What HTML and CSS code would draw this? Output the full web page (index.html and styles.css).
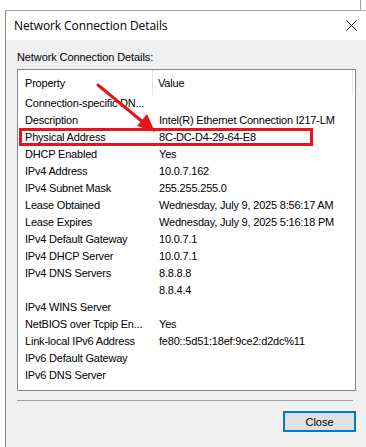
FILE: index.html
```
<!DOCTYPE html>
<html lang="en">
<head>
    <meta charset="UTF-8">
    <title>Network Connection Details</title>
    <link rel="stylesheet" href="styles.css">
</head>
<body>
    <div class="behind"></div>
    <div class="dialog">
        <div class="titlebar">
            <span class="title">Network Connection Details</span>
            <svg class="close-x" width="11" height="11" viewBox="0 0 11 11">
                <path d="M0.5 0.5 L10.5 10.5 M10.5 0.5 L0.5 10.5" stroke="#000" stroke-width="1" fill="none"/>
            </svg>
        </div>
        <div class="content">
            <div class="label">Network Connection Details:</div>
            <div class="listview">
                <div class="lv-head">
                    <div class="hcol prop">Property</div>
                    <div class="hcol val">Value</div>
                    <div class="hcol rest"></div>
                </div>
                <div class="row"><span class="p">Connection-specific DN...</span><span class="v"></span></div>
                <div class="row"><span class="p">Description</span><span class="v">Intel(R) Ethernet Connection I217-LM</span></div>
                <div class="row"><span class="p">Physical Address</span><span class="v">8C-DC-D4-29-64-E8</span></div>
                <div class="row"><span class="p">DHCP Enabled</span><span class="v">Yes</span></div>
                <div class="row"><span class="p">IPv4 Address</span><span class="v">10.0.7.162</span></div>
                <div class="row"><span class="p">IPv4 Subnet Mask</span><span class="v">255.255.255.0</span></div>
                <div class="row"><span class="p">Lease Obtained</span><span class="v">Wednesday, July 9, 2025 8:56:17 AM</span></div>
                <div class="row"><span class="p">Lease Expires</span><span class="v">Wednesday, July 9, 2025 5:16:18 PM</span></div>
                <div class="row"><span class="p">IPv4 Default Gateway</span><span class="v">10.0.7.1</span></div>
                <div class="row"><span class="p">IPv4 DHCP Server</span><span class="v">10.0.7.1</span></div>
                <div class="row"><span class="p">IPv4 DNS Servers</span><span class="v">8.8.8.8</span></div>
                <div class="row"><span class="p"></span><span class="v">8.8.4.4</span></div>
                <div class="row"><span class="p">IPv4 WINS Server</span><span class="v"></span></div>
                <div class="row"><span class="p">NetBIOS over Tcpip En...</span><span class="v">Yes</span></div>
                <div class="row"><span class="p">Link-local IPv6 Address</span><span class="v">fe80::5d51:18ef:9ce2:d2dc%11</span></div>
                <div class="row"><span class="p">IPv6 Default Gateway</span><span class="v"></span></div>
                <div class="row"><span class="p">IPv6 DNS Server</span><span class="v"></span></div>
            </div>
            <div class="sep"></div>
            <div class="buttons">
                <button class="btn">Close</button>
            </div>
        </div>
    </div>

    <!-- annotation drawn over the dialog -->
    <div class="mark"></div>
    <svg class="arrow" width="366" height="447" viewBox="0 0 366 447">
        <line x1="98" y1="85" x2="144" y2="123" stroke="#e8141b" stroke-width="3" stroke-linecap="round"/>
        <polygon points="155,132 137,126 147,114" fill="#e8141b"/>
    </svg>
</body>
</html>
```

FILE: styles.css
```
html, body{
    margin: 0;
    height: 100%;
    overflow: hidden;
}
body{
    position: relative;
    background: #fff;
    font-family: "Liberation Sans", Arial, sans-serif;
    font-size: 11px;
    color: #000;
}
.behind{
    height: 10px;
    width: 360px;
    border-right: 1px solid #a0a0a0;
    background: #fff;
}
.dialog{
    margin-left: 5px;
    width: 362px;
    height: 440px;
    border-left: 1px solid #888;
    border-top: 1px solid #aaa;
    background: #f0f0f0;
    box-sizing: border-box;
}
.titlebar{
    height: 29px;
    background: #fff;
    display: flex;
    align-items: center;
    padding-left: 8px;
    padding-right: 10px;
}
.title{
    flex: 1;
    font-family: "Open Sans", "Liberation Sans", sans-serif;
    font-size: 12px;
    letter-spacing: -0.1px;
}
.close-x{
    display: block;
}
.content{
    padding: 11px 0 0 11px;
}
.label{
    line-height: 13px;
    margin-bottom: 5px;
    letter-spacing: -0.1px;
}
.listview{
    width: 339px;
    height: 322px;
    box-sizing: border-box;
    border: 1px solid #828790;
    background: #fff;
    letter-spacing: -0.2px;
}
.lv-head{
    display: flex;
    height: 25px;
}
.hcol{
    display: flex;
    align-items: center;
    box-sizing: border-box;
}
.hcol.prop{
    width: 135px;
    padding-left: 7px;
    border-right: 1px solid #e5e5e5;
}
.hcol.val{
    width: 200px;
    padding-left: 5px;
    border-right: 1px solid #e5e5e5;
}
.row{
    display: flex;
    height: 17px;
    line-height: 17px;
    white-space: nowrap;
}
.row .p{
    width: 135px;
    padding-left: 7px;
    box-sizing: border-box;
}
.row .v{
    padding-left: 6px;
}
.sep{
    width: 336px;
    height: 1px;
    background: #a0a0a0;
    margin-top: 9px;
}
.buttons{
    display: flex;
    justify-content: flex-end;
    width: 339px;
    margin-top: 10px;
}
.btn{
    width: 73px;
    height: 21px;
    border: 2px solid #0078d7;
    background: #e1e1e1;
    font-family: "Liberation Sans", Arial, sans-serif;
    font-size: 11px;
    color: #000;
    padding: 0;
}
.mark{
    position: absolute;
    left: 19px;
    top: 128px;
    width: 294px;
    height: 18px;
    box-sizing: border-box;
    border: 3px solid #e8141b;
}
.arrow{
    position: absolute;
    left: 0;
    top: 0;
}
```
